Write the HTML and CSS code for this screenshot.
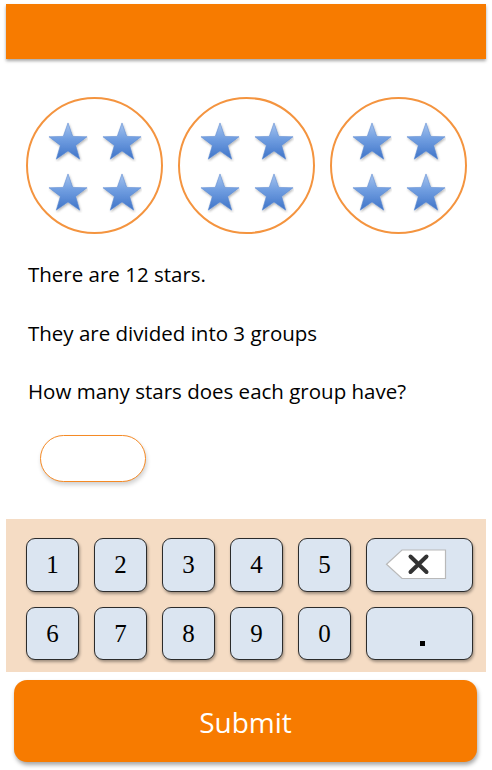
FILE: index.html
```html
<!DOCTYPE html>
<html>
<head>
<meta charset="utf-8">
<link rel="stylesheet" href="styles.css">
</head>
<body>
<svg class="defs" width="0" height="0" aria-hidden="true">
  <defs>
    <linearGradient id="starGrad" x1="0" y1="0" x2="0" y2="1">
      <stop offset="0" stop-color="#a7c4ee"/>
      <stop offset="0.45" stop-color="#6f9de0"/>
      <stop offset="1" stop-color="#3f74c8"/>
    </linearGradient>
    <filter id="starShadow" x="-20%" y="-20%" width="150%" height="150%">
      <feDropShadow dx="0.8" dy="1.5" stdDeviation="1" flood-color="#000" flood-opacity="0.3"/>
    </filter>
    <symbol id="star" viewBox="0 0 42 42">
      <polygon points="21,1 26,15.12 40.97,15.51 29.08,24.63 33.34,38.99 21,30.5 8.66,38.99 12.92,24.63 1.03,15.51 16,15.12" fill="url(#starGrad)" stroke="#5b8ad2" stroke-width="0.6" filter="url(#starShadow)"/>
    </symbol>
  </defs>
</svg>

<header class="topbar"></header>

<section class="groups">
  <div class="group">
    <svg class="star"><use href="#star"/></svg><svg class="star"><use href="#star"/></svg>
    <svg class="star"><use href="#star"/></svg><svg class="star"><use href="#star"/></svg>
  </div>
  <div class="group">
    <svg class="star"><use href="#star"/></svg><svg class="star"><use href="#star"/></svg>
    <svg class="star"><use href="#star"/></svg><svg class="star"><use href="#star"/></svg>
  </div>
  <div class="group">
    <svg class="star"><use href="#star"/></svg><svg class="star"><use href="#star"/></svg>
    <svg class="star"><use href="#star"/></svg><svg class="star"><use href="#star"/></svg>
  </div>
</section>

<section class="question">
  <p>There are 12 stars.</p>
  <p>They are divided into 3 groups</p>
  <p>How many stars does each group have?</p>
</section>

<div class="answer-row">
  <div class="answer"></div>
</div>

<section class="keypad">
  <div class="key">1</div>
  <div class="key">2</div>
  <div class="key">3</div>
  <div class="key">4</div>
  <div class="key">5</div>
  <div class="key wide">
    <svg width="62" height="31" viewBox="0 0 62 31">
      <polygon points="17,1 60.5,1 60.5,29.5 17,29.5 1.5,15.25" fill="#fff" stroke="#b9b9b9" stroke-width="1.2"/>
      <path d="M25.5 7.5 L41.5 23 M41.5 7.5 L25.5 23" stroke="#333" stroke-width="4" stroke-linecap="round"/>
    </svg>
  </div>
  <div class="key">6</div>
  <div class="key">7</div>
  <div class="key">8</div>
  <div class="key">9</div>
  <div class="key">0</div>
  <div class="key wide dot"><span class="dotmark"></span></div>
</section>

<div class="submit-row">
  <button class="submit">Submit</button>
</div>
</body>
</html>
```

FILE: styles.css
```css
* { box-sizing: border-box; }

html, body {
  margin: 0;
  padding: 0;
  background: #ffffff;
  width: 492px;
  height: 770px;
  overflow: hidden;
  font-family: "Open Sans", "Liberation Sans", sans-serif;
}

.defs {
  position: absolute;
  width: 0;
  height: 0;
}

.topbar {
  margin: 4px 6px 0 6px;
  height: 55px;
  background: #f77b00;
  box-shadow: 0 2px 3px rgba(0, 0, 0, 0.35);
}

.groups {
  display: flex;
  gap: 15px;
  padding: 38px 0 0 26px;
}

.group {
  width: 137px;
  height: 137px;
  border: 2px solid #f4943f;
  border-radius: 50%;
  display: grid;
  grid-template-columns: 40px 40px;
  grid-template-rows: 40px 40px;
  column-gap: 14px;
  row-gap: 11px;
  justify-content: center;
  align-content: center;
  padding-top: 3px;
}

.star {
  width: 40px;
  height: 40px;
  display: block;
}

.question {
  padding: 26px 0 0 28px;
}

.question p {
  margin: 0 0 30.5px 0;
  font-size: 20.5px;
  line-height: 28px;
  color: #000;
}

.question p:last-child {
  margin-bottom: 0;
}

.answer-row {
  padding: 30px 0 0 40px;
  height: 114px;
}

.answer {
  width: 106px;
  height: 47px;
  border: 1.5px solid #f58a25;
  border-radius: 24px;
  background: #fff;
  box-shadow: 1px 3px 4px rgba(0, 0, 0, 0.18);
}

.keypad {
  margin: 0 6px;
  height: 153px;
  background: #f5dcc4;
  display: grid;
  grid-template-columns: 53px 53px 53px 53px 53px 107px;
  grid-template-rows: 54px 53px;
  column-gap: 15px;
  row-gap: 15px;
  padding: 19px 0 0 20px;
}

.key {
  background: #dbe5f1;
  border: 1.5px solid #2b2b2b;
  border-radius: 9px;
  box-shadow: 1px 2px 3px rgba(0, 0, 0, 0.35);
  display: flex;
  align-items: center;
  justify-content: center;
  font-family: "Liberation Serif", "DejaVu Serif", serif;
  font-size: 25px;
  color: #000;
}

.key.wide svg {
  display: block;
  margin-right: 8px;
  margin-top: -2px;
}

.dot {
  align-items: flex-end;
}

.dotmark {
  display: block;
  width: 5px;
  height: 5px;
  background: #000;
  margin-bottom: 13px;
  margin-left: 5px;
}

.submit-row {
  padding: 8px 15px 0 14px;
}

.submit {
  display: block;
  width: 463px;
  height: 82px;
  border: none;
  border-radius: 13px;
  background: #f77b00;
  color: #fff;
  font-family: "Open Sans", "Liberation Sans", sans-serif;
  font-size: 28px;
  box-shadow: 1px 3px 4px rgba(0, 0, 0, 0.35);
  padding: 0;
  padding-top: 1px;
}
```
